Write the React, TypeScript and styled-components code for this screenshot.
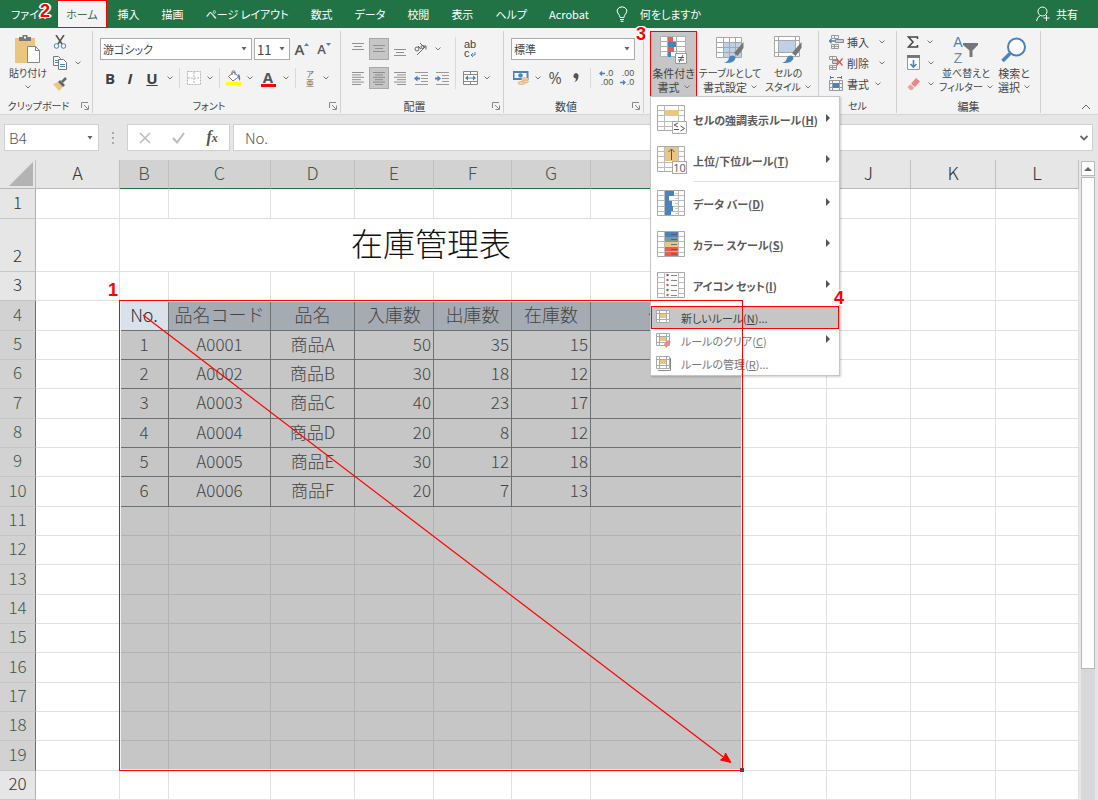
import React from "react";
import styled, { createGlobalStyle, css } from "styled-components";

const ui = `"Noto Sans CJK JP", "Noto Sans", sans-serif`;
const green = "#217346";
const red = "#ff0000";
const blue = "#4a82bd";
const line = "#777777";
const tan = "#ebc680";

const GlobalStyle = createGlobalStyle`
  * { box-sizing: border-box; }
  body {
    margin: 0;
    background: #e6e6e6;
    color: #444444;
    font-family: ${ui};
    font-size: 12px;
    font-feature-settings: "palt";
  }
  button, input, select {
    font: inherit;
    font-feature-settings: inherit;
    color: inherit;
    margin: 0;
    padding: 0;
    border: 0;
    background: none;
    border-radius: 0;
  }
  svg { display: block; flex: none; }
`;

const Page = styled.div`
  display: flex;
  flex-direction: column;
  min-height: 100vh;
  overflow-x: hidden;
`;

/* ---------- title bar ---------- */

const TabBar = styled.nav`
  display: flex;
  align-items: stretch;
  height: 28px;
  background: ${green};
  color: #ffffff;
`;

const Tab = styled.button<{ $active?: boolean }>`
  position: relative;
  padding: 0 11px;
  font-size: 11px;
  line-height: 26px;
  white-space: nowrap;
  &:first-child {
    padding-right: 8px;
  }
  ${(p) =>
    p.$active &&
    css`
      padding: 0 8px;
      background: #f3f3f3;
      color: #3f6b52;
      border: 1px solid ${red};
    `}
`;

const TellMe = styled(Tab)`
  display: flex;
  align-items: center;
  gap: 12px;
  padding-left: 16px;
`;

const Share = styled(TellMe)`
  gap: 6px;
  margin-left: auto;
  padding: 0 20px 0 0;
`;

const Callout = styled.span<{ $left: number; $top: number }>`
  position: absolute;
  left: ${(p) => p.$left}px;
  top: ${(p) => p.$top}px;
  z-index: 30;
  color: ${red};
  font: bold 18px/18px "Liberation Sans", Arial, sans-serif;
  text-shadow: 1px 0 #fff, -1px 0 #fff, 0 1px #fff, 0 -1px #fff, 1px 1px #fff, -1px -1px #fff,
    1px -1px #fff, -1px 1px #fff, 2px 0 #fff, -2px 0 #fff;
`;

/* ---------- ribbon ---------- */

const Ribbon = styled.div`
  display: flex;
  background: #f3f3f3;
  border-bottom: 1px solid #d6d6d6;
  padding-top: 3px;
  height: 87px;
`;

const Group = styled.section<{ $w: number }>`
  display: flex;
  flex-direction: column;
  flex: none;
  width: ${(p) => p.$w}px;
  height: 82px;
  border-right: 1px solid #d0d0d0;
`;

const GroupBody = styled.div<{ $pad?: number; $gap?: number }>`
  display: flex;
  flex: 1;
  gap: ${(p) => p.$gap || 0}px;
  padding-left: ${(p) => (p.$pad === undefined ? 7 : p.$pad)}px;
`;

const GroupFooter = styled.div<{ $compact?: boolean }>`
  display: flex;
  align-items: center;
  height: 14px;
  font-size: ${(p) => (p.$compact ? 10 : 11)}px;
  line-height: 14px;
`;

const GroupName = styled.span`
  flex: 1;
  text-align: center;
`;

const Launcher = styled.button`
  display: flex;
  justify-content: center;
  width: 15px;
`;

const Rows = styled.div`
  display: flex;
  flex-direction: column;
  gap: 7px;
  padding-top: 7px;
`;

const ToolRow = styled.div<{ $gap?: number }>`
  display: flex;
  align-items: center;
  height: 22px;
  gap: ${(p) => p.$gap || 0}px;
`;

const Tool = styled.button<{ $w?: number; $on?: boolean }>`
  display: flex;
  flex: none;
  align-items: center;
  justify-content: center;
  width: ${(p) => p.$w || 20}px;
  height: 22px;
  ${(p) => p.$on && "background: #c6c6c6; border: 1px solid #a8a8a8;"}
`;

const Letter = styled(Tool)`
  font: bold 15px/22px "Open Sans", sans-serif;
  color: #404040;
`;

const Divider = styled.i<{ $h?: number }>`
  flex: none;
  width: 1px;
  height: ${(p) => p.$h || 20}px;
  margin: 0 4px 0 3px;
  background: #dadada;
`;

const TallDivider = styled(Divider)`
  margin-top: 6px;
`;

const SelectBox = styled.div<{ $w: number }>`
  position: relative;
  display: flex;
  flex: none;
  align-items: center;
  width: ${(p) => p.$w}px;
  height: 22px;
  background: #ffffff;
  border: 1px solid #ababab;
  font-size: 11px;
  select {
    appearance: none;
    width: 100%;
    height: 20px;
    padding-left: 2px;
    outline: 0;
  }
  svg {
    position: absolute;
    right: 4px;
    pointer-events: none;
  }
`;

const SizeBox = styled(SelectBox)`
  font-size: 13px;
`;

const Big = styled.button<{ $w: number; $on?: boolean }>`
  position: relative;
  display: flex;
  flex: none;
  flex-direction: column;
  align-items: center;
  width: ${(p) => p.$w}px;
  height: 66px;
  padding-top: 3px;
  font-size: 11px;
  line-height: 14px;
  white-space: nowrap;
  ${(p) =>
    p.$on &&
    css`
      padding-top: 2px;
      background: #c6c6c6;
      border: 1px solid ${red};
    `}
`;

const BigIcon = styled.span`
  display: flex;
  align-items: center;
  justify-content: center;
  height: 32px;
`;

const BigLine = styled.span<{ $compact?: boolean }>`
  display: flex;
  align-items: center;
  gap: 4px;
  height: 14px;
  font-size: ${(p) => (p.$compact ? 10 : 11)}px;
`;

const SmallStack = styled.div`
  display: flex;
  flex-direction: column;
`;

const SmallTool = styled.button<{ $gap?: number }>`
  display: flex;
  align-items: center;
  gap: ${(p) => p.$gap || 3}px;
  height: 21px;
  font-size: 11px;
  line-height: 14px;
`;

const Collapse = styled.button`
  align-self: flex-end;
  margin-left: auto;
  padding: 4px 7px;
`;

/* ---------- menu ---------- */

const MenuAnchor = styled.div`
  position: relative;
  flex: none;
`;

const Menu = styled.div`
  position: absolute;
  left: 0;
  top: 65px;
  z-index: 10;
  width: 190px;
  padding: 2px 0 0;
  background: #ffffff;
  border: 1px solid #c6c6c6;
  box-shadow: 1px 1px 2px rgba(0, 0, 0, 0.2);
`;

const MenuItem = styled.button<{ $small?: boolean; $on?: boolean }>`
  position: relative;
  display: flex;
  align-items: center;
  width: 100%;
  height: ${(p) => (p.$small ? 23 : 41)}px;
  gap: ${(p) => (p.$small ? 10 : 6)}px;
  padding-left: ${(p) => (p.$small ? 5 : 6)}px;
  padding-right: 8px;
  font-size: 11px;
  font-weight: ${(p) => (p.$small ? 400 : 700)};
  color: ${(p) => (p.$on ? "#444444" : p.$small ? "#777777" : "#5a5a5a")};
  white-space: nowrap;
  ${(p) =>
    p.$on &&
    css`
      padding-left: 4px;
      background: #c6c6c6;
      border: 1px solid ${red};
    `}
  > svg:last-of-type:not(:first-child) {
    margin-left: auto;
  }
`;

const MenuRule = styled.hr`
  height: 1px;
  margin: 0 0 1px 42px;
  border: 0;
  background: #e1e1e1;
`;

/* ---------- formula bar ---------- */

const FormulaBar = styled.div`
  display: flex;
  align-items: center;
  height: 45px;
  padding: 0 5px 0 4px;
  color: #555555;
  font-size: 15px;
  font-weight: 300;
`;

const Field = styled.div<{ $w?: number }>`
  display: flex;
  align-items: center;
  ${(p) => (p.$w ? `flex: none; width: ${p.$w}px;` : "flex: 1;")}
  min-width: 0;
  height: 27px;
  background: #ffffff;
  border: 1px solid #d0d0d0;
  input {
    flex: 1;
    min-width: 0;
    height: 25px;
    outline: 0;
  }
`;

const NameField = styled(Field)`
  padding: 0 5px 0 4px;
`;

const FxField = styled(Field)`
  margin-right: 3px;
  justify-content: space-around;
`;

const FormulaField = styled(Field)`
  padding: 0 4px 0 11px;
`;

const FxButton = styled.button`
  display: flex;
  align-items: baseline;
  justify-content: center;
  width: 20px;
  font: bold 16px/20px "Liberation Serif", serif;
  color: #555555;
  i + i {
    font-size: 12px;
  }
`;

const Grip = styled.span`
  display: flex;
  justify-content: center;
  width: 28px;
`;

/* ---------- sheet ---------- */

const SheetArea = styled.main`
  display: flex;
  flex: 1;
`;

const SheetBox = styled.div`
  position: relative;
  flex: 1;
  min-width: 0;
  overflow: hidden;
`;

const Sheet = styled.table`
  width: 100%;
  table-layout: fixed;
  border-collapse: separate;
  border-spacing: 0;
  background: #ffffff;
  font-size: 18px;
  font-weight: 300;
  line-height: 24px;
  font-feature-settings: normal;
`;

const Col = styled.col<{ $w?: number }>`
  ${(p) => p.$w && `width: ${p.$w}px;`}
`;

const HeadRow = styled.tr`
  height: 29px;
`;

const Row = styled.tr<{ $tall?: boolean }>`
  height: 29px;
  &:nth-child(3n + 1) {
    height: 30px;
  }
  ${(p) => p.$tall && "height: 53px;"}
`;

const Head = styled.th<{ $sel?: boolean }>`
  padding: 0 0 4px;
  font-weight: 300;
  color: ${(p) => (p.$sel ? "#41584c" : "#333333")};
  background: ${(p) => (p.$sel ? "#d2d2d2" : "#e6e6e6")};
`;

const ColHead = styled(Head)`
  border-right: 1px solid #c0c0c0;
  border-bottom: 1px solid ${(p) => (p.$sel ? green : "#b8b8b8")};
`;

const RowHead = styled(Head)`
  font-size: 17px;
  vertical-align: bottom;
  border-bottom: 1px solid #c6c6c6;
  border-right: 1px solid ${(p) => (p.$sel ? "#4f7d64" : "#b0b0b0")};
`;

const Corner = styled(ColHead)`
  padding: 0;
  svg {
    margin-left: 9px;
  }
`;

type CellKind = "plain" | "sel" | "data" | "title" | "active";

const Cell = styled.td<{ $kind: CellKind; $right?: boolean }>`
  padding: 0 2px 3px;
  overflow: hidden;
  white-space: nowrap;
  text-align: ${(p) => (p.$right ? "right" : "center")};
  border-right: 1px solid #e0e0e0;
  border-bottom: 1px solid #e0e0e0;
  ${(p) => p.$kind === "sel" && "background: #c6c6c6; border-color: #b2b2b2;"}
  ${(p) =>
    p.$kind === "data" &&
    "background: #c6c6c6; border-color: #6c7070; color: #444444; font-size: 17px;"}
  ${(p) =>
    p.$kind === "title" &&
    "background: #a5abb3; border-color: #6c7070; color: #444444;"}
  ${(p) =>
    p.$kind === "active" &&
    "background: #d9e1ea; border-color: #6c7070; color: #333333;"}
`;

const SheetTitle = styled.td`
  padding: 0 0 7px;
  color: #111111;
  font-size: 32px;
  line-height: 40px;
  text-align: center;
  border-right: 1px solid #e0e0e0;
  border-bottom: 1px solid #e0e0e0;
`;

/* Range outline with the drag arrow, drawn above cells and menu. */
const RangeOutline = styled.div`
  position: absolute;
  left: 119px;
  top: 140px;
  z-index: 20;
  width: 624px;
  height: 471px;
  border: 1px solid ${red};
  pointer-events: none;
`;

const RangeGap = styled.div`
  position: absolute;
  left: 120px;
  top: 141px;
  width: 622px;
  height: 469px;
  border: 1px solid #f0f0f0;
  pointer-events: none;
`;

const FillHandle = styled.i`
  position: absolute;
  right: -2px;
  bottom: -2px;
  width: 4px;
  height: 4px;
  background: #8c2b2b;
`;

const ScrollBar = styled.div`
  display: flex;
  flex: none;
  flex-direction: column;
  width: 19px;
  padding: 1px 3px 0 2px;
  background: #e6e6e6;
`;

const ScrollButton = styled.button`
  display: flex;
  align-items: center;
  justify-content: center;
  height: 15px;
  margin-bottom: 1px;
  background: #ffffff;
  border: 1px solid #b8b8b8;
`;

const ScrollTrack = styled.div`
  flex: 1;
  background: #d6d8da;
`;

const ScrollThumb = styled.div`
  height: 79%;
  background: #ffffff;
  border: 1px solid #b8b8b8;
`;

/* ---------- drawings ---------- */

type IconProps = { w: number; h: number; children: React.ReactNode };
const Svg = ({ w, h, children }: IconProps) => (
  <svg width={w} height={h} viewBox={`0 0 ${w} ${h}`} fill="none" aria-hidden="true">
    {children}
  </svg>
);

const Chevron = () => (
  <Svg w={6} h={4}>
    <path d="M.5.5 3 3 5.500.5" stroke="#777" />
  </Svg>
);
const Triangle = () => (
  <Svg w={6} h={4}>
    <path d="M.5 0h5L3 3.500z" fill="#666" />
  </Svg>
);
const SubArrow = () => (
  <Svg w={5} h={14}>
    <path d="M0 1v8l4-4z" fill="#555" />
  </Svg>
);
const LauncherIcon = () => (
  <Svg w={8} h={8}>
    <path d="M.5 6V.5H7M3 3l4 4M7.500 3.500v4h-4" stroke="#888" />
  </Svg>
);

const PasteIcon = () => (
  <Svg w={28} h={30}>
    <path d="M1 3h20v25H1z" fill={tan} />
    <path d="M5 6V2h3.500V0h5v2H17v4z" fill="#777" />
    <path d="M10 1.500h2v2h-2z" fill="#f3f3f3" />
    <path d="M13.500 11.500h8l4 4v12h-12z" fill="#fff" stroke="#888" />
    <path d="M21.500 11.500v4h4" stroke="#888" />
  </Svg>
);
const CutIcon = () => (
  <Svg w={14} h={14}>
    <path d="M3 0l6 9M11 0 5 9" stroke="#555" strokeWidth="1.600" />
    <circle cx="3.500" cy="11" r="2.300" stroke={blue} />
    <circle cx="10.500" cy="11" r="2.300" stroke={blue} />
  </Svg>
);
const CopyIcon = () => (
  <Svg w={14} h={14}>
    <path d="M.5.5h5l2 2v7h-7z" fill="#fff" stroke={line} />
    <path d="M5.500 3.500h5l3 3v7h-8z" fill="#fff" stroke={line} />
    <path d="M7 8.500h5M7 10.500h5M2 4.500h3M2 6.500h3" stroke={blue} />
  </Svg>
);
const BrushIcon = () => (
  <Svg w={14} h={14}>
    <path d="M0 7l5-2 5 5-4 4z" fill={tan} />
    <path d="M5 5l2-2 5 5-2 2z" fill="#666" />
    <path d="M9 5l4-4" stroke="#666" strokeWidth="2.500" />
  </Svg>
);
const BordersIcon = () => (
  <Svg w={14} h={14}>
    <path d="M.5.5h13v13H.5z" fill="#fff" />
    <path d="M.5.5h13v13H.5zM7 1v12M1 7h12" stroke="#b4b4b4" strokeDasharray="2 1" />
  </Svg>
);
const FillIcon = () => (
  <Svg w={16} h={16}>
    <path d="M2.500 6.500 8 2l4.500 5L7 11z" fill="#fff" stroke={line} />
    <path d="M6 5V1.500q1.500-1.500 3 0V5" stroke={line} />
    <path d="M12 4q3 1 2 7-2-2-2-7z" fill={blue} />
    <path d="M0 12h15v3.500H0z" fill="#ffff00" />
  </Svg>
);
const FontColor = styled.span`
  width: 15px;
  height: 17px;
  border-bottom: 3px solid ${red};
  font: bold 15px/14px "Open Sans", sans-serif;
  text-align: center;
  color: #555555;
`;
const GrowLetter = styled.span<{ $size: number }>`
  font: 600 ${(p) => p.$size}px/20px "Open Sans", sans-serif;
  color: #555555;
`;
const Percent = styled.span`
  font: 16px/20px "Open Sans", sans-serif;
  color: #555555;
`;
const SizeMark = ({ up }: { up?: boolean }) => (
  <Svg w={5} h={14}>
    <path d={up ? "M0 4l2.500-3L5 4z" : "M0 1h5L2.500 4z"} fill={blue} />
  </Svg>
);
const Phonetic = styled.span`
  display: flex;
  flex-direction: column;
  font-size: 8px;
  line-height: 9px;
  color: #666666;
`;

const widths: Record<string, number[][]> = {
  left: [[0, 12], [0, 9], [0, 12], [0, 9], [0, 12], [0, 9]],
  center: [[0, 12], [2, 10], [0, 12], [2, 10], [0, 12], [2, 10]],
  right: [[0, 12], [3, 12], [0, 12], [3, 12], [0, 12], [3, 12]],
};
const AlignIcon = ({ side }: { side: string }) => (
  <Svg w={12} h={14}>
    {widths[side].map(([a, b], i) => (
      <path key={i} d={`M${a} ${1.5 + i * 2.4}H${b}`} stroke="#858585" strokeWidth=".9" />
    ))}
  </Svg>
);
const VAlignIcon = ({ y }: { y: number }) => (
  <Svg w={12} h={18}>
    <path d={`M0 ${y}.5h12M2 ${y + 3}.5h8M0 ${y + 6}.5h12`} stroke="#909090" />
  </Svg>
);
const OrientIcon = () => (
  <Svg w={14} h={14}>
    <path d="M3 13 12 4M12 4H8.500M12 4v3.500" stroke="#666" />
    <circle cx="3" cy="7" r="2" stroke="#666" />
    <path d="M4 4l3 3M6 1l4 4" stroke="#666" />
    <circle cx="8.500" cy="5" r="1.500" stroke="#666" />
  </Svg>
);
const IndentIcon = ({ out }: { out?: boolean }) => (
  <Svg w={14} h={14}>
    <path d="M1 1.500h13M7 4.500h7M7 7.500h7M7 10.500h7M1 13.500h13" stroke="#999" />
    <path d={out ? "M0 7.500l3.500-3v2H6v2H3.500v2z" : "M6 7.500 2.500 4.500v2H0v2h2.500v2z"} fill={blue} />
  </Svg>
);
const WrapText = styled.span`
  position: relative;
  display: flex;
  flex-direction: column;
  width: 12px;
  font: 11px/9px "Liberation Sans", sans-serif;
  text-align: left;
  svg {
    position: absolute;
    right: 0;
    bottom: 0;
  }
`;
const MergeIcon = () => (
  <Svg w={15} h={14}>
    <path d="M.5.5h14v13H.5zM.5 3.500h14M.5 10.500h14M7.500.5v3M7.500 10.500v3" fill="#fff" stroke="#888" />
    <path d="M3 7h9" stroke={blue} />
    <path d="M5 4.500v5L2 7zM10 4.500v5L13 7z" fill={blue} />
  </Svg>
);
const MoneyIcon = () => (
  <Svg w={16} h={14}>
    <path d="M.5 1h14v7H.5z" fill="#fff" stroke={blue} strokeWidth="2" />
    <circle cx="7.500" cy="4.500" r="2.300" fill={blue} />
    <ellipse cx="12" cy="8" rx="3.500" ry="1.500" fill="#f3d3ac" stroke="#e09a60" strokeWidth=".6" />
    <ellipse cx="12" cy="10.500" rx="3.500" ry="1.500" fill="#f3d3ac" stroke="#e09a60" strokeWidth=".6" />
    <ellipse cx="8.500" cy="12" rx="3.500" ry="1.500" fill="#f3d3ac" stroke="#e09a60" strokeWidth=".6" />
  </Svg>
);
const Decimals = styled.span`
  display: flex;
  flex-direction: column;
  align-items: flex-end;
  font: 9px/9px "Liberation Sans", sans-serif;
  color: #555555;
  span {
    display: flex;
    align-items: center;
    gap: 1px;
  }
`;
const TinyArrow = ({ left }: { left?: boolean }) => (
  <Svg w={6} h={5}>
    <path d={left ? "M6 2.500H1M3 .5l-2 2 2 2" : "M0 2.500h5M3 .5l2 2-2 2"} stroke={blue} strokeWidth="1.300" />
  </Svg>
);
const GridLines = ({ w, h }: { w: number; h: number }) => (
  <>
    <path d={`M.5.5h${w - 1}v${h - 1}H.5z`} fill="#fff" stroke="#aaa" />
    <path
      d={`M${Math.round(w / 4)}.5.5v${h - 1}M${Math.round((w * 3) / 4)}.5.5v${h - 1}M.5 ${Math.round(h / 5)}.5h${w - 1}M.5 ${Math.round((h * 2) / 5)}.5h${w - 1}M.5 ${Math.round((h * 3) / 5)}.5h${w - 1}M.5 ${Math.round((h * 4) / 5)}.5h${w - 1}`}
      stroke="#bcbcbc"
    />
  </>
);
const CondIcon = () => (
  <Svg w={28} h={28}>
    <path d="M.5.5h25v20H.5zM7.500.5v20M16.500.5v20M.5 5.500h25M.5 10.500h25M.5 15.500h25" fill="#fff" stroke="#b0b0b0" />
    <path d="M8 1h5v5H8zM8 11h6v5H8z" fill="#ef5b52" />
    <path d="M8 6h8v5H8zM8 16h3v5H8z" fill={blue} />
    <path d="M15.500 17.500h11v10h-11z" fill="#fff" stroke="#999" />
    <path d="M18 21.500h6M18 24h6M23 19l-4 7.500" stroke="#555" />
  </Svg>
);
const BrushOver = () => (
  <>
    <path d="M27.500 6v6l-6 8-3.500-3z" fill="#757575" />
    <path d="M8 27q4-1 5-5 1-3 4-2.500 3.500 1.500 2 4-2 4-11 3.500z" fill={blue} />
  </>
);
const TableIcon = () => (
  <Svg w={28} h={28}>
    <path d="M.5 1.500h25v20H.5z" fill="#fff" />
    <path d="M7 7h18.500v14.500H7z" fill="#bdd0e6" />
    <path d="M.5 1.500h25v20H.5zM7.500 1.500v20M13.500 1.500v20M19.500 1.500v20M.5 6.500h25M.5 11.500h25M.5 16.500h25" stroke="#a8a8a8" />
    <BrushOver />
  </Svg>
);
const StyleIcon = () => (
  <Svg w={28} h={28}>
    <path d="M.5.5h25v20H.5z" fill="#fff" />
    <path d="M5 5h16v11H5z" fill="#bdd0e6" />
    <path d="M.5.5h25v20H.5zM4.500.5v20M21.500.5v20M.5 4.500h25M.5 16.500h25" stroke="#a8a8a8" />
    <BrushOver />
  </Svg>
);
const InsertIcon = () => (
  <Svg w={15} h={14}>
    <path d="M2.500.5h7v3h-7zM5.500.5v3M2.500 9.500h7v4h-7zM5.500 9.500v4M2.500 11.500h7" stroke="#999" />
    <path d="M6.500 4.500h8v3h-8z" fill="#c3d3e6" stroke="#888" />
    <path d="M0 6h6M2.500 4 .5 6l2 2" stroke={blue} strokeWidth="1.300" />
  </Svg>
);
const DeleteIcon = () => (
  <Svg w={15} h={14}>
    <path d="M.5.5h7v3h-7zM3.500.5v3M.5 9.500h7v4h-7zM3.500 9.500v4M.5 11.500h7" stroke="#999" />
    <path d="M3.500 4.500h5v3h-5z" fill="#c3d3e6" stroke="#888" />
    <path d="M7.500 2.500l6 7M13.500 2.500l-6 7" stroke="#e8504a" strokeWidth="1.300" />
  </Svg>
);
const FormatIcon = () => (
  <Svg w={15} h={15}>
    <path d="M.5 4.500h13v10H.5zM3.500 4.500v10M10.500 4.500v10M.5 7.500h13M.5 11.500h13" stroke="#999" />
    <path d="M4 7h6v5H4z" fill={blue} />
    <path d="M1 1.500h4M8 1.500h4M1.500 0v3M12.500 0v3" stroke={blue} />
  </Svg>
);
const SigmaIcon = () => (
  <Svg w={12} h={12}>
    <path d="M10.500 3V1H1.500L6 6l-4.500 5h9V9" stroke="#444" strokeWidth="1.500" />
  </Svg>
);
const FillDownIcon = () => (
  <Svg w={13} h={15}>
    <path d="M.5.5h12v14H.5z" fill="#fff" stroke="#999" />
    <path d="M0 0h13v3H0z" fill="#777" />
    <path d="M6.500 5v7M3.500 9l3 3 3-3" stroke={blue} strokeWidth="1.600" />
  </Svg>
);
const EraserIcon = () => (
  <Svg w={13} h={13}>
    <path d="M4 6.500 9 1l4 3.500-5 5.500z" fill="#ea8a88" />
    <path d="M3.300 7.200 7.200 11l-2 2H3L.5 10z" fill="#ef9f9c" />
  </Svg>
);
const SortLetters = styled.span`
  display: flex;
  flex-direction: column;
  font: 14px/16px "Liberation Sans", sans-serif;
  color: ${blue};
  span {
    color: #6f8aa8;
  }
`;
const FunnelIcon = () => (
  <Svg w={16} h={16}>
    <path d="M0 1h15v2L9.500 8.500V15h-3V8.500L0 3z" fill="#777" />
  </Svg>
);
const SearchIcon = () => (
  <Svg w={26} h={26}>
    <circle cx="15.500" cy="10" r="8.500" fill="#fff" stroke={blue} strokeWidth="2" />
    <path d="M9 16.500 1.500 24" stroke={blue} strokeWidth="3.500" />
  </Svg>
);
const BulbIcon = () => (
  <Svg w={12} h={16}>
    <path d="M4 11.500Q4 9.500 2.500 8 .8 6 1.200 4 2.500.8 6 .8T10.800 4q.4 2-1.300 4Q8 9.500 8 11.500zM4 13.500h4M4.500 15.300h3" stroke="#fff" />
  </Svg>
);
const PersonIcon = () => (
  <Svg w={14} h={16}>
    <circle cx="6.500" cy="5.500" r="4.500" stroke="#fff" />
    <path d="M.5 15q.5-4 4-5.500M10.500 9v6M7.500 12h6" stroke="#fff" />
  </Svg>
);

const HighlightIcon = () => (
  <Svg w={30} h={29}>
    <GridLines w={28} h={26} />
    <path d="M8 5h14v6H8z" fill={tan} />
    <path d="M15.500 16.500h14v12h-14z" fill="#fff" stroke="#aaa" />
    <path d="M21 18l-4 2 4 2M17 24.500h5M23.500 21l4 2.500-4 2.500" stroke="#555" />
  </Svg>
);
const TenBox = styled.span`
  position: absolute;
  left: 21px;
  top: 21px;
  width: 15px;
  height: 13px;
  background: #ffffff;
  border: 1px solid #aaaaaa;
  font: 11px/11px "Open Sans", sans-serif;
  text-align: center;
`;
const TopIcon = () => (
  <Svg w={30} h={29}>
    <GridLines w={28} h={26} />
    <path d="M8 1h13v14H8z" fill={tan} />
    <path d="M14.500 14V3M11.500 6l3-3 3 3" stroke="#555" />
  </Svg>
);
const BarIcon = () => (
  <Svg w={30} h={27}>
    <GridLines w={28} h={26} />
    <path d="M8 1h9v5H8zM8 6h4v5H8zM8 11h7v5H8zM8 16h8v5H8zM8 21h6v4H8z" fill={blue} />
    <path d="M18 3.500h3M18 8.500h3M18 13.500h3M18 18.500h3M18 23.500h3" stroke="#ccc" />
  </Svg>
);
const ScaleIcon = () => (
  <Svg w={30} h={27}>
    <GridLines w={28} h={26} />
    <path d="M8 1h13v5H8z" fill={blue} />
    <path d="M8 6h13v5H8z" fill="#7d99a5" />
    <path d="M8 11h13v5H8z" fill={tan} />
    <path d="M8 16h13v9H8z" fill="#ea5b50" />
    <path d="M8 20.500h13" stroke="#f7a090" />
    <path d="M14 3.500h6M14 8.500h6M14 13.500h6M14 18.500h6M14 23h6" stroke="#555" strokeWidth=".8" />
  </Svg>
);
const SetIcon = () => (
  <Svg w={30} h={27}>
    <GridLines w={28} h={26} />
    <path d="M8 1h13v24H8z" fill="#fff" />
    {[3, 8, 13, 18, 23].map((y, i) => (
      <React.Fragment key={y}>
        <circle cx="10.500" cy={y} r="1.200" fill={i === 0 || i === 3 ? "#666" : "#e8504a"} />
        <path d={`M14 ${y}.5h6`} stroke="#888" />
      </React.Fragment>
    ))}
  </Svg>
);
const RuleIcon = ({ variant }: { variant: "new" | "clear" | "manage" }) => (
  <Svg w={15} h={15}>
    <path d="M.5.5h13v12H.5z" fill="#fff" />
    <path d="M.5.5h13v12H.5zM3.500.5v12M10.500.5v12M.5 3.500h13M.5 9.500h13" stroke="#aaa" />
    <path d="M4 4h6v4H4z" fill={tan} />
    {variant === "clear" && <path d="M8 11l4-4 3 2-5 6z" fill="#ea8a88" />}
    {variant === "manage" && <path d="M2 14.500h12.500V2" stroke="#888" />}
  </Svg>
);

/* ---------- data ---------- */

const columns: [string, number?][] = [
  ["A", 84], ["B", 49], ["C", 102], ["D", 84], ["E", 79], ["F", 78],
  ["G", 79], ["H", 152], ["I", 84], ["J", 84], ["K", 85], ["L"],
];

const titles = ["No.", "品名コード", "品名", "入庫数", "出庫数", "在庫数", "備考"];
const stock: (string | number)[][] = [
  [1, "A0001", "商品A", 50, 35, 15],
  [2, "A0002", "商品B", 30, 18, 12],
  [3, "A0003", "商品C", 40, 23, 17],
  [4, "A0004", "商品D", 20, 8, 12],
  [5, "A0005", "商品E", 30, 12, 18],
  [6, "A0006", "商品F", 20, 7, 13],
];

const cellAt = (row: number, col: number) => {
  const inRange = row >= 4 && row <= 19 && col >= 1 && col <= 7;
  if (!inRange) return <Cell key={col} $kind="plain" />;
  if (row === 4)
    return (
      <Cell key={col} $kind={col === 1 ? "active" : "title"}>
        {titles[col - 1]}
      </Cell>
    );
  if (row <= 10)
    return (
      <Cell key={col} $kind="data" $right={col >= 4}>
        {stock[row - 5][col - 1]}
      </Cell>
    );
  return <Cell key={col} $kind="sel" />;
};

type FootProps = { name?: string; launcher?: boolean; compact?: boolean };
const GroupFoot = ({ name, launcher, compact }: FootProps) => (
  <GroupFooter $compact={compact}>
    <GroupName>{name}</GroupName>
    {launcher && (
      <Launcher aria-label={`${name}の詳細`}>
        <LauncherIcon />
      </Launcher>
    )}
  </GroupFooter>
);

const Drop = () => (
  <Tool $w={12} aria-label="その他">
    <Chevron />
  </Tool>
);

const Key = ({ k }: { k: string }) => (
  <>
    (<u>{k}</u>)
  </>
);

export default function App() {
  return (
    <Page>
      <GlobalStyle />
      <TabBar>
        <Tab>ファイル</Tab>
        <Tab $active>
          ホーム
          <Callout $left={-18} $top={1}>2</Callout>
        </Tab>
        {["挿入", "描画", "ページ レイアウト", "数式", "データ", "校閲", "表示", "ヘルプ", "Acrobat"].map((t) => (
          <Tab key={t}>{t}</Tab>
        ))}
        <TellMe>
          <BulbIcon />
          何をしますか
        </TellMe>
        <Share>
          <PersonIcon />
          共有
        </Share>
      </TabBar>

      <Ribbon>
        <Group $w={93}>
          <GroupBody $gap={4}>
            <Big $w={42}>
              <BigIcon><PasteIcon /></BigIcon>
              <BigLine $compact>貼り付け</BigLine>
              <BigLine><Chevron /></BigLine>
            </Big>
            <SmallStack>
              <SmallTool aria-label="切り取り"><CutIcon /></SmallTool>
              <SmallTool $gap={8} aria-label="コピー"><CopyIcon /><Chevron /></SmallTool>
              <SmallTool aria-label="書式のコピー"><BrushIcon /></SmallTool>
            </SmallStack>
          </GroupBody>
          <GroupFoot name="クリップボード" launcher compact />
        </Group>

        <Group $w={248}>
          <GroupBody>
            <Rows>
              <ToolRow $gap={2}>
                <SelectBox $w={152}>
                  <select aria-label="フォント"><option>游ゴシック</option></select>
                  <Triangle />
                </SelectBox>
                <SizeBox $w={36}>
                  <select aria-label="フォント サイズ"><option>11</option></select>
                  <Triangle />
                </SizeBox>
                <Tool aria-label="フォント サイズの拡大"><GrowLetter $size={15}>A</GrowLetter><SizeMark up /></Tool>
                <Tool aria-label="フォント サイズの縮小"><GrowLetter $size={13}>A</GrowLetter><SizeMark /></Tool>
              </ToolRow>
              <ToolRow>
                <Letter>B</Letter>
                <Letter><i>I</i></Letter>
                <Letter $w={24}><u>U</u></Letter>
                <Drop />
                <Divider />
                <Tool aria-label="罫線"><BordersIcon /></Tool>
                <Drop />
                <Divider />
                <Tool aria-label="塗りつぶしの色"><FillIcon /></Tool>
                <Drop />
                <Tool $w={24}><FontColor>A</FontColor></Tool>
                <Drop />
                <Divider />
                <Tool><Phonetic><span>ア</span><span>亜</span></Phonetic></Tool>
                <Drop />
              </ToolRow>
            </Rows>
          </GroupBody>
          <GroupFoot name="フォント" launcher compact />
        </Group>

        <Group $w={163}>
          <GroupBody>
            <Rows>
              <ToolRow $gap={1}>
                <Tool aria-label="上揃え"><VAlignIcon y={3} /></Tool>
                <Tool $on aria-label="上下中央揃え"><VAlignIcon y={5} /></Tool>
                <Tool aria-label="下揃え"><VAlignIcon y={9} /></Tool>
                <Tool aria-label="方向"><OrientIcon /></Tool>
                <Drop />
              </ToolRow>
              <ToolRow $gap={1}>
                <Tool aria-label="左揃え"><AlignIcon side="left" /></Tool>
                <Tool $on aria-label="中央揃え"><AlignIcon side="center" /></Tool>
                <Tool aria-label="右揃え"><AlignIcon side="right" /></Tool>
                <Tool aria-label="インデントを減らす"><IndentIcon out /></Tool>
                <Tool aria-label="インデントを増やす"><IndentIcon /></Tool>
              </ToolRow>
            </Rows>
            <TallDivider $h={52} />
            <Rows>
              <ToolRow>
                <Tool>
                  <WrapText>
                    <span>ab</span>
                    <span>c</span>
                    <Svg w={6} h={6}>
                      <path d="M5 0v3H1M3 1 1 3l2 2" stroke={blue} />
                    </Svg>
                  </WrapText>
                </Tool>
              </ToolRow>
              <ToolRow $gap={1}>
                <Tool aria-label="セルを結合して中央揃え"><MergeIcon /></Tool>
                <Drop />
              </ToolRow>
            </Rows>
          </GroupBody>
          <GroupFoot name="配置" launcher />
        </Group>

        <Group $w={140}>
          <GroupBody>
            <Rows>
              <ToolRow>
                <SelectBox $w={124}>
                  <select aria-label="表示形式"><option>標準</option></select>
                  <Triangle />
                </SelectBox>
              </ToolRow>
              <ToolRow $gap={1}>
                <Tool aria-label="通貨表示形式"><MoneyIcon /></Tool>
                <Drop />
                <Tool><Percent>%</Percent></Tool>
                <Tool aria-label="桁区切りスタイル">
                  <Svg w={6} h={10}>
                    <path d="M3 0q3 .5 2.500 4Q5 8 1 9.500q2-2 2-4Q0 5 .5 2.500 1 .3 3 0z" fill="#555" />
                  </Svg>
                </Tool>
                <Divider />
                <Tool><Decimals><span><TinyArrow left />.0</span><span>.00</span></Decimals></Tool>
                <Tool><Decimals><span>.00</span><span><TinyArrow />.0</span></Decimals></Tool>
              </ToolRow>
            </Rows>
          </GroupBody>
          <GroupFoot name="数値" launcher />
        </Group>

        <Group $w={175}>
          <GroupBody $pad={6} $gap={2}>
            <MenuAnchor>
              <Big $w={47} $on>
                <BigIcon><CondIcon /></BigIcon>
                <BigLine>条件付き</BigLine>
                <BigLine>書式<Chevron /></BigLine>
              </Big>
              <Callout $left={-14} $top={-6}>3</Callout>
              <Menu>
                <MenuItem><HighlightIcon /><span>セルの強調表示ルール<Key k="H" /></span><SubArrow /></MenuItem>
                <MenuItem><TopIcon /><TenBox>10</TenBox><span>上位/下位ルール<Key k="T" /></span><SubArrow /></MenuItem>
                <MenuRule />
                <MenuItem><BarIcon /><span>データ バー<Key k="D" /></span><SubArrow /></MenuItem>
                <MenuItem><ScaleIcon /><span>カラー スケール<Key k="S" /></span><SubArrow /></MenuItem>
                <MenuItem><SetIcon /><span>アイコン セット<Key k="I" /></span><SubArrow /></MenuItem>
                <MenuItem $small $on>
                  <RuleIcon variant="new" /><span>新しいルール<Key k="N" />...</span>
                  <Callout $left={182} $top={-18}>4</Callout>
                </MenuItem>
                <MenuItem $small><RuleIcon variant="clear" /><span>ルールのクリア<Key k="C" /></span><SubArrow /></MenuItem>
                <MenuItem $small><RuleIcon variant="manage" /><span>ルールの管理<Key k="R" />...</span></MenuItem>
              </Menu>
            </MenuAnchor>
            <Big $w={62}>
              <BigIcon><TableIcon /></BigIcon>
              <BigLine $compact>テーブルとして</BigLine>
              <BigLine>書式設定<Chevron /></BigLine>
            </Big>
            <Big $w={50}>
              <BigIcon><StyleIcon /></BigIcon>
              <BigLine $compact>セルの</BigLine>
              <BigLine $compact>スタイル<Chevron /></BigLine>
            </Big>
          </GroupBody>
          <GroupFoot />
        </Group>

        <Group $w={78}>
          <GroupBody $pad={10}>
            <SmallStack>
              <SmallTool><InsertIcon />挿入<Tool as="span" $w={20}><Chevron /></Tool></SmallTool>
              <SmallTool><DeleteIcon />削除<Tool as="span" $w={20}><Chevron /></Tool></SmallTool>
              <SmallTool><FormatIcon />書式<Tool as="span" $w={12}><Chevron /></Tool></SmallTool>
            </SmallStack>
          </GroupBody>
          <GroupFoot name="セル" compact />
        </Group>

        <Group $w={144}>
          <GroupBody $pad={10} $gap={6}>
            <SmallStack>
              <SmallTool $gap={8} aria-label="オート SUM"><SigmaIcon /><Chevron /></SmallTool>
              <SmallTool $gap={8} aria-label="フィル"><FillDownIcon /><Chevron /></SmallTool>
              <SmallTool $gap={8} aria-label="クリア"><EraserIcon /><Chevron /></SmallTool>
            </SmallStack>
            <Big $w={52}>
              <BigIcon><SortLetters>A<span>Z</span></SortLetters><FunnelIcon /></BigIcon>
              <BigLine $compact>並べ替えと</BigLine>
              <BigLine $compact>フィルター<Chevron /></BigLine>
            </Big>
            <Big $w={32}>
              <BigIcon><SearchIcon /></BigIcon>
              <BigLine>検索と</BigLine>
              <BigLine>選択<Chevron /></BigLine>
            </Big>
          </GroupBody>
          <GroupFoot name="編集" />
        </Group>
        <Collapse aria-label="リボンを折りたたむ">
          <Svg w={10} h={6}>
            <path d="M1 5l4-4 4 4" stroke="#666" />
          </Svg>
        </Collapse>
      </Ribbon>

      <FormulaBar>
        <NameField $w={95}>
          <input aria-label="名前ボックス" defaultValue="B4" />
          <Triangle />
        </NameField>
        <Grip>
          <Svg w={2} h={12}>
            <path d="M0 0h2v2H0zM0 5h2v2H0zM0 10h2v2H0z" fill="#aaa" />
          </Svg>
        </Grip>
        <FxField $w={103}>
          <Tool aria-label="キャンセル">
            <Svg w={12} h={12}><path d="M1 1l10 10M11 1 1 11" stroke="#bbb" strokeWidth="1.500" /></Svg>
          </Tool>
          <Tool aria-label="入力">
            <Svg w={13} h={12}><path d="M1 6l4 4.500L12 1" stroke="#bbb" strokeWidth="2" /></Svg>
          </Tool>
          <FxButton><i>f</i><i>x</i></FxButton>
        </FxField>
        <FormulaField>
          <input aria-label="数式バー" defaultValue="No." />
          <Svg w={8} h={6}><path d="M.5 1 4 4.500 7.500 1" stroke="#666" strokeWidth="1.800" /></Svg>
        </FormulaField>
      </FormulaBar>

      <SheetArea>
        <SheetBox>
          <Sheet>
            <colgroup>
              <Col $w={36} />
              {columns.map(([name, w]) => (
                <Col key={name} $w={w} />
              ))}
            </colgroup>
            <thead>
              <HeadRow>
                <Corner>
                  <Svg w={24} h={24}><path d="M24 0v24H0z" fill="#b3b3b3" /></Svg>
                </Corner>
                {columns.map(([name], i) => (
                  <ColHead key={name} $sel={i >= 1 && i <= 7}>{name}</ColHead>
                ))}
              </HeadRow>
            </thead>
            <tbody>
              {Array.from({ length: 20 }, (_, i) => i + 1).map((row) => (
                <Row key={row} $tall={row === 2}>
                  <RowHead $sel={row >= 4 && row <= 19}>{row}</RowHead>
                  {row === 2 ? (
                    <>
                      {cellAt(2, 0)}
                      <SheetTitle colSpan={7}>在庫管理表</SheetTitle>
                      {[8, 9, 10, 11].map((c) => cellAt(2, c))}
                    </>
                  ) : (
                    columns.map((_, c) => cellAt(row, c))
                  )}
                </Row>
              ))}
            </tbody>
          </Sheet>
          <RangeGap />
          <RangeOutline>
            <Callout $left={-12} $top={-20}>1</Callout>
            <Svg w={622} h={469}>
              <path d="M23 14 606 458" stroke={red} strokeWidth="1.200" />
              <path d="M611 461.500 600.500 459l3.500-2.500 1.500-4.500z" fill={red} stroke={red} />
            </Svg>
            <FillHandle />
          </RangeOutline>
        </SheetBox>
        <ScrollBar>
          <ScrollButton aria-label="上へスクロール">
            <Svg w={8} h={4}><path d="M0 4l4-4 4 4z" fill="#666" /></Svg>
          </ScrollButton>
          <ScrollTrack><ScrollThumb /></ScrollTrack>
        </ScrollBar>
      </SheetArea>
    </Page>
  );
}
